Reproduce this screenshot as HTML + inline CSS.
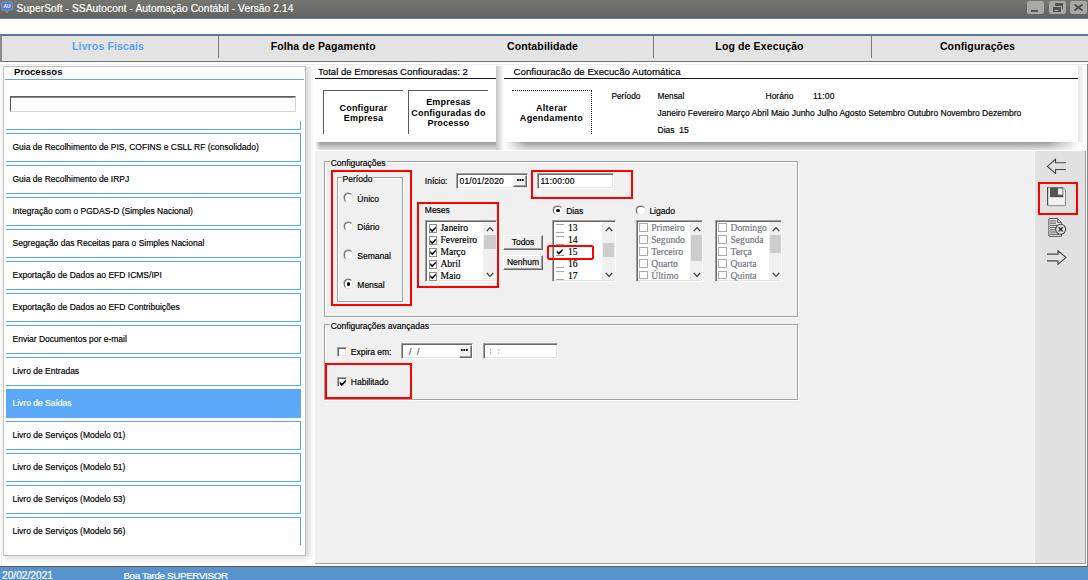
<!DOCTYPE html>
<html><head><meta charset="utf-8">
<style>
*{box-sizing:border-box;margin:0;padding:0}
html,body{width:1088px;height:580px;overflow:hidden;background:#fff;font-family:"Liberation Sans",sans-serif;font-size:8.5px;color:#000;-webkit-text-stroke:.18px currentColor}
.abs{position:absolute}
#title{left:0;top:0;width:1088px;height:18px;background:linear-gradient(#757670,#62635e)}
#title .t{left:16.5px;top:2.5px;color:#fff;font-size:10.2px;line-height:12px;letter-spacing:.09px;white-space:nowrap}
.wb{top:1px;width:17px;height:13px;background:#a8a8a6;border-radius:2.5px}
#strip{left:0;top:18px;width:1088px;height:17px;background:#fff;border-top:1px solid #4d88c9;border-bottom:1px solid #3f80c5}
#tabs{left:0;top:35px;width:1088px;height:27px;background:#e3e3e3;border:1px solid #707070;border-left:2px solid #8a8a8a;border-right:none}
.tab{-webkit-text-stroke:0;top:35px;height:22px;text-align:center;font-weight:bold;font-size:10.5px;letter-spacing:.13px;line-height:22px;white-space:nowrap}
.sep{top:36px;width:1px;height:22px;background:#787878}
#left{left:3px;top:66px;width:303px;height:490px;background:#fff;border:1px solid #bdbdbd}
.bl{background:#5ba5f5;height:1px}
.item{left:6px;width:295px;height:29px;border:1px solid #5ba5f5;border-left:none;background:#fff;font-size:8.5px;line-height:27px;padding-left:6.5px;white-space:nowrap}
.item.sel{background:#5ba8f8;color:#fff}
#status{left:0;top:566px;width:1088px;height:14px;border-top:1px solid #5f5a58;background:#5893cd;color:#fff;overflow:hidden}
.btn{-webkit-text-stroke:0;background:#fff;border-top:1px solid #5a5a5a;border-left:1px solid #5a5a5a;font-weight:bold;font-size:9px;letter-spacing:.2px;text-align:center;line-height:10.5px;overflow:hidden;white-space:nowrap}
.fs{border:1px solid #a0a0a0;box-shadow:1px 1px 0 #fff, inset 1px 1px 0 #fff}
.lg{background:#f0f0f0;line-height:10px;padding:0 1px;white-space:nowrap}
.lbl{line-height:10px;white-space:nowrap}
.red{border:2.4px solid #f00}
.inp{background:#fff;border:1px solid;border-color:#a0a0a0 #fff #fff #a0a0a0;box-shadow:inset 1px 1px 0 #696969, inset -1px -1px 0 #e3e3e3;line-height:11px;white-space:nowrap;overflow:hidden}
.radio{width:9.5px;height:9.5px;border-radius:50%;background:#fff;border:1px solid;border-color:#6e6e6e #e8e8e8 #e8e8e8 #6e6e6e;box-shadow:-0.5px -0.5px 0 #a0a0a0}
.radio.on:after{content:"";position:absolute;left:2px;top:2px;width:3.6px;height:3.6px;border-radius:50%;background:#000}
.list{background:#fff;border:1px solid;border-color:#a0a0a0 #fff #fff #a0a0a0;box-shadow:inset 1px 1px 0 #696969, inset -1px -1px 0 #e3e3e3;font-family:"Liberation Serif",serif;font-size:9.6px;overflow:hidden;padding:1px}
.li{position:absolute;height:12px;line-height:12px;white-space:nowrap}
.cb{position:absolute;width:8.5px;height:9px;border:1px solid #8c8c8c;background:#fff}
.scb{width:10px;height:10px;background:#fff;border:1px solid;border-color:#a0a0a0 #fff #fff #a0a0a0;box-shadow:inset 1px 1px 0 #696969, inset -1px -1px 0 #e3e3e3}
.sb{position:absolute;top:1px;bottom:1px;background:#f0f0f0}
.thumb{position:absolute;left:0.5px;right:0.5px;background:#cdcdcd}
.pb{background:#f0f0f0;border:1px solid;border-color:#fff #696969 #696969 #fff;box-shadow:inset -1px -1px 0 #a0a0a0;text-align:center;white-space:nowrap}
</style></head><body>
<div id="title" class="abs"><svg class="abs" style="left:1px;top:1px" width="12" height="13" viewBox="0 0 12 13"><path d="M2 1h8a1.5 1.5 0 0 1 1.5 1.5v5a1.5 1.5 0 0 1-1.5 1.5h-2.500l-1.500 3-1.500-3h-2.500a1.500 1.500 0 0 1-1.500-1.500v-5a1.500 1.500 0 0 1 1.500-1.500z" fill="#4f7cc4" stroke="#7fa0d6" stroke-width=".8"/><text x="6" y="7" font-size="4.8" font-family="Liberation Sans" font-weight="bold" fill="#fff" text-anchor="middle">AU</text></svg><div class="abs t">SuperSoft - SSAutocont - Automação Contábil - Versão 2.14</div>
<div class="abs wb" style="left:1027px"><div class="abs" style="left:4px;top:9px;width:7px;height:1.5px;background:#555"></div></div>
<div class="abs wb" style="left:1049px"><div class="abs" style="left:6px;top:2px;width:8px;height:6px;background:#555"></div><div class="abs" style="left:3.5px;top:5.5px;width:8px;height:5.5px;background:#555;border:1px solid #a8a8a6;box-sizing:content-box;margin:-1px"></div><div class="abs" style="left:6px;top:8.5px;width:3px;height:1px;background:#a8a8a6"></div></div>
<div class="abs wb" style="left:1070px"><svg class="abs" style="left:4px;top:3px" width="9" height="7" viewBox="0 0 9 7"><path d="M0.500 0.500 L8.500 6.500 M8.500 0.500 L0.500 6.500" stroke="#4a4a4a" stroke-width="1.800"/></svg></div>
</div>
<div id="strip" class="abs"></div>
<div id="tabs" class="abs"></div>
<div class="abs tab" style="left:8px;width:200px;color:#5aa2f4">Livros Fiscais</div>
<div class="abs tab" style="left:223.2px;width:200px;color:#000">Folha de Pagamento</div>
<div class="abs tab" style="left:442.5px;width:200px;color:#000">Contabilidade</div>
<div class="abs tab" style="left:659.5px;width:200px;color:#000">Log de Execução</div>
<div class="abs tab" style="left:877.5px;width:200px;color:#000">Configurações</div>
<div class="abs sep" style="left:218px"></div><div class="abs sep" style="left:653px"></div><div class="abs sep" style="left:871px"></div>
<div class="abs" style="left:1px;top:64px;width:1px;height:502px;background:#ececec"></div>
<div class="abs" style="left:1px;top:64px;width:1086px;height:1px;background:#ededed"></div>
<div class="abs" style="left:306px;top:67px;width:8px;height:490px;background:linear-gradient(90deg,#dcdcdc,#fff)"></div>
<div class="abs" style="left:5px;top:556px;width:301px;height:7px;background:linear-gradient(#e4e4e4,#fff)"></div>
<div class="abs" style="left:315px;top:151px;width:770px;height:412px;background:#f0f0f0"></div>
<div id="left" class="abs"></div>
<div class="abs" style="left:14px;top:66px;-webkit-text-stroke:0;font-weight:bold;font-size:9.6px;line-height:11px">Processos</div>
<div class="abs bl" style="left:5px;top:79px;width:299px"></div>
<div class="abs" style="left:10px;top:96px;width:286px;height:16px;background:#fff;border:1px solid #d6d6d6;border-top:1px solid #5e5e5e;border-left:1px solid #5a5a5a;box-shadow:inset 0 1px 0 #8a8a8a"></div>
<div class="abs bl" style="left:6px;top:129px;width:295px"></div>
<div class="abs" style="left:300px;top:121px;width:1px;height:9px;background:#5ba5f5"></div>
<div class="abs item" style="top:133px">Guia de Recolhimento de PIS, COFINS e CSLL RF (consolidado)</div>
<div class="abs item" style="top:165px">Guia de Recolhimento de IRPJ</div>
<div class="abs item" style="top:197px">Integração com o PGDAS-D (Simples Nacional)</div>
<div class="abs item" style="top:229px">Segregação das Receitas para o Simples Nacional</div>
<div class="abs item" style="top:261px">Exportação de Dados ao EFD ICMS/IPI</div>
<div class="abs item" style="top:293px">Exportação de Dados ao EFD Contribuições</div>
<div class="abs item" style="top:325px">Enviar Documentos por e-mail</div>
<div class="abs item" style="top:357px">Livro de Entradas</div>
<div class="abs item sel" style="top:389px">Livro de Saídas</div>
<div class="abs item" style="top:421px">Livro de Serviços (Modelo 01)</div>
<div class="abs item" style="top:453px">Livro de Serviços (Modelo 51)</div>
<div class="abs item" style="top:485px">Livro de Serviços (Modelo 53)</div>
<div class="abs item" style="top:517px;border-bottom:none;height:28px">Livro de Serviços (Modelo 56)</div>

<div class="abs" style="left:315px;top:142px;width:181px;height:8px;background:linear-gradient(#9c9c9c,#e2e2e2)"></div>
<div class="abs" style="left:315px;top:142px;width:5px;height:8px;background:linear-gradient(90deg,#fff,rgba(255,255,255,0))"></div>
<div class="abs" style="left:496px;top:66px;width:8px;height:84px;background:linear-gradient(90deg,#c4c4c4,#fff)"></div>
<div class="abs lbl" style="left:318px;top:66.6px;font-size:9.6px;height:8.5px;line-height:10px;overflow:hidden">Total de Empresas Configuradas: 2</div>
<div class="abs" style="left:315px;top:78px;width:181px;height:1px;background:#111"></div>
<div class="abs btn" style="left:323px;top:90px;width:80px;height:44px;padding-top:11.6px">Configurar<br>Empresa</div>
<div class="abs btn" style="left:408px;top:90px;width:80px;height:44px;padding-top:6.4px"><div style="height:28.6px;overflow:hidden">Empresas<br>Configuradas do<br>Processo</div></div>
<div class="abs" style="left:504px;top:142px;width:574px;height:8px;background:linear-gradient(#9c9c9c,#e2e2e2)"></div>
<div class="abs" style="left:504px;top:142px;width:22px;height:8px;background:linear-gradient(90deg,#fff,rgba(255,255,255,0))"></div>
<div class="abs" style="left:1078px;top:66px;width:8px;height:84px;background:linear-gradient(90deg,#e6e6e6,#fff)"></div>
<div class="abs" style="left:1048px;top:142px;width:38px;height:8px;background:linear-gradient(90deg,rgba(255,255,255,0),#fff 85%)"></div>
<div class="abs lbl" style="left:513.6px;top:66.6px;font-size:9.7px;height:8.5px;line-height:10px;overflow:hidden">Configuração de Execução Automática</div>
<div class="abs" style="left:504px;top:78px;width:574px;height:1px;background:#111"></div>
<div class="abs" style="left:512px;top:90px;width:80px;height:44px;border-top:1px dotted #111;border-right:1px dotted #111;-webkit-text-stroke:0;font-weight:bold;font-size:9px;letter-spacing:.300px;text-align:center;line-height:10.9px;padding-top:11.5px;white-space:nowrap">Alterar<br>Agendamento</div>
<div class="abs lbl" style="left:611.4px;top:91px;font-size:8.3px">Período</div>
<div class="abs lbl" style="left:657.5px;top:91px;font-size:8.3px">Mensal</div>
<div class="abs lbl" style="left:765.5px;top:91px">Horário</div>
<div class="abs lbl" style="left:813px;top:91px;letter-spacing:.200px">11:00</div>
<div class="abs lbl" style="left:657.5px;top:108px">Janeiro Fevereiro Março Abril Maio Junho Julho Agosto Setembro Outubro Novembro Dezembro</div>
<div class="abs lbl" style="left:657.5px;top:124.6px">Dias&nbsp; 15</div>

<div class="abs" style="left:1034px;top:151px;width:51px;height:412px;background:#e1e1e1;border-left:1px solid #fbfbfb"></div>
<div class="abs" style="left:1085px;top:151px;width:1px;height:413px;background:#999"></div>
<div class="abs" style="left:1087px;top:64px;width:1px;height:502px;background:#858585"></div>
<div class="abs" style="left:315px;top:563px;width:771px;height:1px;background:#a0a0a0"></div>
<div class="abs" style="left:315px;top:150px;width:771px;height:1px;background:#fdfdfd"></div>

<div class="abs fs" style="left:324px;top:161px;width:474px;height:156px"></div>
<div class="abs lg" style="left:329.7px;top:158px">Configurações</div>
<div class="abs fs" style="left:337px;top:177px;width:66px;height:125px"></div>
<div class="abs lg" style="left:341.6px;top:173.7px">Período</div>
<div class="abs red" style="left:331px;top:170px;width:81px;height:136px"></div>
<div class="abs radio" style="left:343.8px;top:193px"></div><div class="abs lbl" style="left:357.3px;top:193.55px">Único</div>
<div class="abs radio" style="left:343.8px;top:221.75px"></div><div class="abs lbl" style="left:357.3px;top:222.3px">Diário</div>
<div class="abs radio" style="left:343.8px;top:250.45px"></div><div class="abs lbl" style="left:357.3px;top:251px">Semanal</div>
<div class="abs radio on" style="left:343.8px;top:279.25px"></div><div class="abs lbl" style="left:357.3px;top:279.8px">Mensal</div>

<div class="abs lbl" style="left:424.8px;top:176px">Início:</div>
<div class="abs inp" style="left:456px;top:173px;width:72px;height:15.5px;padding:2.3px 0 0 2.5px;letter-spacing:.200px">01/01/2020</div>
<div class="abs pb" style="left:513px;top:175px;width:14px;height:12px"></div><svg class="abs" style="left:516.5px;top:179.3px" width="7" height="2" viewBox="0 0 7 2"><rect x="0" y="0" width="1.700" height="2" fill="#000"/><rect x="2.500" y="0" width="1.700" height="2" fill="#000"/><rect x="5" y="0" width="1.700" height="2" fill="#000"/></svg>
<div class="abs inp" style="left:537px;top:173px;width:77px;height:15.5px;padding:2.3px 0 0 2.5px;letter-spacing:.200px">11:00:00</div>
<div class="abs red" style="left:531px;top:170px;width:102px;height:29px"></div>
<div class="abs lbl" style="left:424.8px;top:205px">Meses</div>
<div class="abs list" style="left:425px;top:220px;width:72px;height:62px"><div class="cb" style="left:2.5px;top:3px;border-color:#8c8c8c"></div><svg style="position:absolute;left:2.8px;top:3.6px" width="8" height="8" viewBox="0 0 8 8"><path d="M1.2 3 L3.2 5 L6.8 1.4 V3.6 L3.2 7.2 L1.2 5.2 Z" fill="#000"/></svg><div class="li" style="left:14.4px;top:1px;color:#000">Janeiro</div><div class="cb" style="left:2.5px;top:14.9px;border-color:#8c8c8c"></div><svg style="position:absolute;left:2.8px;top:15.5px" width="8" height="8" viewBox="0 0 8 8"><path d="M1.2 3 L3.2 5 L6.8 1.4 V3.6 L3.2 7.2 L1.2 5.2 Z" fill="#000"/></svg><div class="li" style="left:14.4px;top:12.9px;color:#000">Fevereiro</div><div class="cb" style="left:2.5px;top:26.8px;border-color:#8c8c8c"></div><svg style="position:absolute;left:2.8px;top:27.4px" width="8" height="8" viewBox="0 0 8 8"><path d="M1.2 3 L3.2 5 L6.8 1.4 V3.6 L3.2 7.2 L1.2 5.2 Z" fill="#000"/></svg><div class="li" style="left:14.4px;top:24.8px;color:#000">Março</div><div class="cb" style="left:2.5px;top:38.7px;border-color:#8c8c8c"></div><svg style="position:absolute;left:2.8px;top:39.3px" width="8" height="8" viewBox="0 0 8 8"><path d="M1.2 3 L3.2 5 L6.8 1.4 V3.6 L3.2 7.2 L1.2 5.2 Z" fill="#000"/></svg><div class="li" style="left:14.4px;top:36.7px;color:#000">Abril</div><div class="cb" style="left:2.5px;top:50.6px;border-color:#8c8c8c"></div><svg style="position:absolute;left:2.8px;top:51.2px" width="8" height="8" viewBox="0 0 8 8"><path d="M1.2 3 L3.2 5 L6.8 1.4 V3.6 L3.2 7.2 L1.2 5.2 Z" fill="#000"/></svg><div class="li" style="left:14.4px;top:48.6px;color:#000">Maio</div><div class="sb" style="left:57px;width:13px"><svg style="position:absolute;left:2.5px;top:3.5px" width="8" height="6" viewBox="0 0 8 6"><path d="M0.8 5 L4 1.6 L7.2 5" stroke="#404040" stroke-width="1.3" fill="none"/></svg><div class="thumb" style="top:13px;height:13.75px"></div><svg style="position:absolute;left:2.5px;top:49.5px" width="8" height="6" viewBox="0 0 8 6"><path d="M0.8 1 L4 4.4 L7.2 1" stroke="#404040" stroke-width="1.3" fill="none"/></svg></div></div><div class="abs red" style="left:417px;top:202.2px;width:81.8px;height:85.6px"></div>
<div class="abs pb" style="left:503px;top:234.6px;width:40px;height:15.5px;line-height:13px">Todos</div>
<div class="abs pb" style="left:503px;top:254.6px;width:40px;height:15.2px;line-height:13px">Nenhum</div>
<div class="abs radio on" style="left:553.2px;top:205.7px"></div><div class="abs lbl" style="left:566.2px;top:205.8px">Dias</div>
<div class="abs list" style="left:552px;top:220px;width:63.5px;height:62px"><div style="position:absolute;left:3.25px;top:2.7px;width:7.5px;height:1px;background:#a6a6a6"></div><div style="position:absolute;left:3.25px;top:10.6px;width:7.5px;height:1px;background:#a6a6a6"></div><div class="li" style="left:15px;top:1px">13</div><div style="position:absolute;left:3.25px;top:14.6px;width:7.5px;height:1px;background:#a6a6a6"></div><div style="position:absolute;left:3.25px;top:22.5px;width:7.5px;height:1px;background:#a6a6a6"></div><div class="li" style="left:15px;top:12.9px">14</div><svg style="position:absolute;left:3.25px;top:27.3px" width="8" height="8" viewBox="0 0 8 8"><path d="M0.8 2.6 L2.8 4.6 L6.6 0.8 V3 L2.8 6.8 L0.8 4.8 Z" fill="#000"/></svg><div style="position:absolute;left:3.25px;top:34.4px;width:7.5px;height:1px;background:#a0a0a0"></div><div class="li" style="left:15px;top:24.8px">15</div><div style="position:absolute;left:3.25px;top:38.4px;width:7.5px;height:1px;background:#a6a6a6"></div><div style="position:absolute;left:3.25px;top:46.3px;width:7.5px;height:1px;background:#a6a6a6"></div><div class="li" style="left:15px;top:36.7px">16</div><div style="position:absolute;left:3.25px;top:50.3px;width:7.5px;height:1px;background:#a6a6a6"></div><div style="position:absolute;left:3.25px;top:58.2px;width:7.5px;height:1px;background:#a6a6a6"></div><div class="li" style="left:15px;top:48.6px">17</div><div class="sb" style="left:49px;width:12.5px"><svg style="position:absolute;left:2.5px;top:3.5px" width="8" height="6" viewBox="0 0 8 6"><path d="M0.8 5 L4 1.6 L7.2 5" stroke="#404040" stroke-width="1.3" fill="none"/></svg><div class="thumb" style="top:21.25px;height:13.65px"></div><svg style="position:absolute;left:2.5px;top:49.5px" width="8" height="6" viewBox="0 0 8 6"><path d="M0.8 1 L4 4.4 L7.2 1" stroke="#404040" stroke-width="1.3" fill="none"/></svg></div></div><div class="abs red" style="left:547.2px;top:245.4px;width:46.8px;height:14.2px;border-radius:2.5px"></div>
<div class="abs radio" style="left:636px;top:205.7px"></div><div class="abs lbl" style="left:649.4px;top:205.8px">Ligado</div>
<div class="abs list" style="left:636px;top:220px;width:67.4px;height:62px"><div class="cb" style="left:2.4px;top:2.3px;border-color:#ababab;height:8.5px"></div><div class="li" style="left:14.25px;top:1px;color:#747480">Primeiro</div><div class="cb" style="left:2.4px;top:14.2px;border-color:#ababab;height:8.5px"></div><div class="li" style="left:14.25px;top:12.9px;color:#747480">Segundo</div><div class="cb" style="left:2.4px;top:26.1px;border-color:#ababab;height:8.5px"></div><div class="li" style="left:14.25px;top:24.8px;color:#747480">Terceiro</div><div class="cb" style="left:2.4px;top:38px;border-color:#ababab;height:8.5px"></div><div class="li" style="left:14.25px;top:36.7px;color:#747480">Quarto</div><div class="cb" style="left:2.4px;top:49.9px;border-color:#ababab;height:8.5px"></div><div class="li" style="left:14.25px;top:48.6px;color:#747480">Último</div><div class="sb" style="left:53px;width:12.4px"><svg style="position:absolute;left:2.5px;top:3.5px" width="8" height="6" viewBox="0 0 8 6"><path d="M0.8 5 L4 1.6 L7.2 5" stroke="#404040" stroke-width="1.3" fill="none"/></svg><div class="thumb" style="top:12.9px;height:25.9px"></div><svg style="position:absolute;left:2.5px;top:49.5px" width="8" height="6" viewBox="0 0 8 6"><path d="M0.8 1 L4 4.4 L7.2 1" stroke="#404040" stroke-width="1.3" fill="none"/></svg></div></div><div class="abs list" style="left:715px;top:220px;width:67px;height:62px"><div class="cb" style="left:2.3px;top:2.3px;border-color:#ababab;height:8.5px"></div><div class="li" style="left:14.5px;top:1px;color:#747480">Domingo</div><div class="cb" style="left:2.3px;top:14.2px;border-color:#ababab;height:8.5px"></div><div class="li" style="left:14.5px;top:12.9px;color:#747480">Segunda</div><div class="cb" style="left:2.3px;top:26.1px;border-color:#ababab;height:8.5px"></div><div class="li" style="left:14.5px;top:24.8px;color:#747480">Terça</div><div class="cb" style="left:2.3px;top:38px;border-color:#ababab;height:8.5px"></div><div class="li" style="left:14.5px;top:36.7px;color:#747480">Quarta</div><div class="cb" style="left:2.3px;top:49.9px;border-color:#ababab;height:8.5px"></div><div class="li" style="left:14.5px;top:48.6px;color:#747480">Quinta</div><div class="sb" style="left:53px;width:12px"><svg style="position:absolute;left:2.5px;top:3.5px" width="8" height="6" viewBox="0 0 8 6"><path d="M0.8 5 L4 1.6 L7.2 5" stroke="#404040" stroke-width="1.3" fill="none"/></svg><div class="thumb" style="top:12.9px;height:18.6px"></div><svg style="position:absolute;left:2.5px;top:49.5px" width="8" height="6" viewBox="0 0 8 6"><path d="M0.8 1 L4 4.4 L7.2 1" stroke="#404040" stroke-width="1.3" fill="none"/></svg></div></div>
<div class="abs fs" style="left:324px;top:324px;width:474px;height:76px"></div>
<div class="abs lg" style="left:329.7px;top:320.6px">Configurações avançadas</div>
<div class="abs scb" style="left:337px;top:347px"></div><div class="abs lbl" style="left:350.8px;top:347.1px">Expira em:</div>
<div class="abs inp" style="left:401px;top:343px;width:71.5px;height:16px;padding:2.6px 0 0 7px;color:#50506a;letter-spacing:.300px">/&nbsp;&nbsp;/</div>
<div class="abs pb" style="left:458.5px;top:345px;width:13px;height:12.5px"></div><svg class="abs" style="left:461.2px;top:349.3px" width="7" height="2" viewBox="0 0 7 2"><rect x="0" y="0" width="1.700" height="2" fill="#000"/><rect x="2.500" y="0" width="1.700" height="2" fill="#000"/><rect x="5" y="0" width="1.700" height="2" fill="#000"/></svg>
<div class="abs inp" style="left:483px;top:343px;width:75px;height:16px;border-color:#a0a0a0 #fff #fff #a0a0a0"></div>
<svg class="abs" style="left:489px;top:348px" width="12" height="7" viewBox="0 0 12 7"><g fill="#b08a70"><rect x="1" y="1.300" width="1" height="1.200"/><rect x="1" y="4.600" width="1" height="1.200"/><rect x="9.300" y="1.300" width="1" height="1.200"/><rect x="9.300" y="4.600" width="1" height="1.200"/></g></svg>
<div class="abs scb" style="left:337px;top:377px"></div><svg class="abs" style="left:338.5px;top:378.6px" width="8" height="8" viewBox="0 0 8 8"><path d="M0.800 2.400 L2.800 4.400 L6.800 0.600 V3 L2.800 7 L0.800 5 Z" fill="#000"/></svg><div class="abs lbl" style="left:350.8px;top:377px">Habilitado</div>
<div class="abs red" style="left:325.4px;top:363.1px;width:86.6px;height:36.3px"></div>

<svg class="abs" style="left:1046px;top:158px" width="22" height="17" viewBox="0 0 22 17"><path d="M20 4.800 H9.500 V1.300 L1.400 8.400 L9.500 15.400 V11.500 H20" stroke="#484848" stroke-width="1.100" fill="none" stroke-linejoin="miter"/></svg>
<svg class="abs" style="left:1047px;top:187px" width="19" height="20" viewBox="0 0 19 20"><path d="M0.500 0.500 H16 L18.500 3 V18.500 H0.500 Z" fill="#f2f2f2" stroke="#8a8a8a" stroke-width="1"/><path d="M0.600 0 V19" stroke="#4a4a4a" stroke-width="1.200"/><path d="M0 18.600 H19" stroke="#9a9a9a" stroke-width="1.200"/><rect x="2.900" y="0.500" width="13.400" height="9.700" fill="#555"/><rect x="11" y="1.500" width="4.500" height="6.200" fill="#eee"/></svg>
<div class="abs red" style="left:1038px;top:182px;width:40.2px;height:33.2px;border-width:2.6px"></div>
<svg class="abs" style="left:1048px;top:218px" width="19" height="20" viewBox="0 0 19 20"><path d="M0.900 0.500 H9.500 L13.500 4.500 V18.300 H0.900 Z" fill="#e8e8e8" stroke="#555" stroke-width="1"/><path d="M9.500 0.500 V4.500 H13.500" fill="none" stroke="#555" stroke-width=".9"/><path d="M2 3H8M2 5.200H8M2 7.400H11M2 9.600H11M2 11.800H11M2 14H11M2 16.200H11" stroke="#555" stroke-width="1"/><circle cx="12.700" cy="11.300" r="5" fill="#e4e4e4" stroke="#444" stroke-width="1.100"/><path d="M10.600 9.200 L14.800 13.400 M14.800 9.200 L10.600 13.400" stroke="#333" stroke-width="1.400"/></svg>
<svg class="abs" style="left:1046px;top:249px" width="22" height="17" viewBox="0 0 22 17"><path d="M1 5.100 H12 V1.800 L20 8.500 L12 15.300 V11.900 H1" stroke="#484848" stroke-width="1.100" fill="none"/></svg>
<div id="status" class="abs"><div class="abs" style="left:2px;top:2.8px;font-size:10.2px;line-height:12px;white-space:nowrap">20/02/2021</div><div class="abs" style="left:123.4px;top:2.8px;font-size:9.8px;letter-spacing:-.350px;line-height:12px;white-space:nowrap">Boa Tarde SUPERVISOR</div></div>
</body></html>
